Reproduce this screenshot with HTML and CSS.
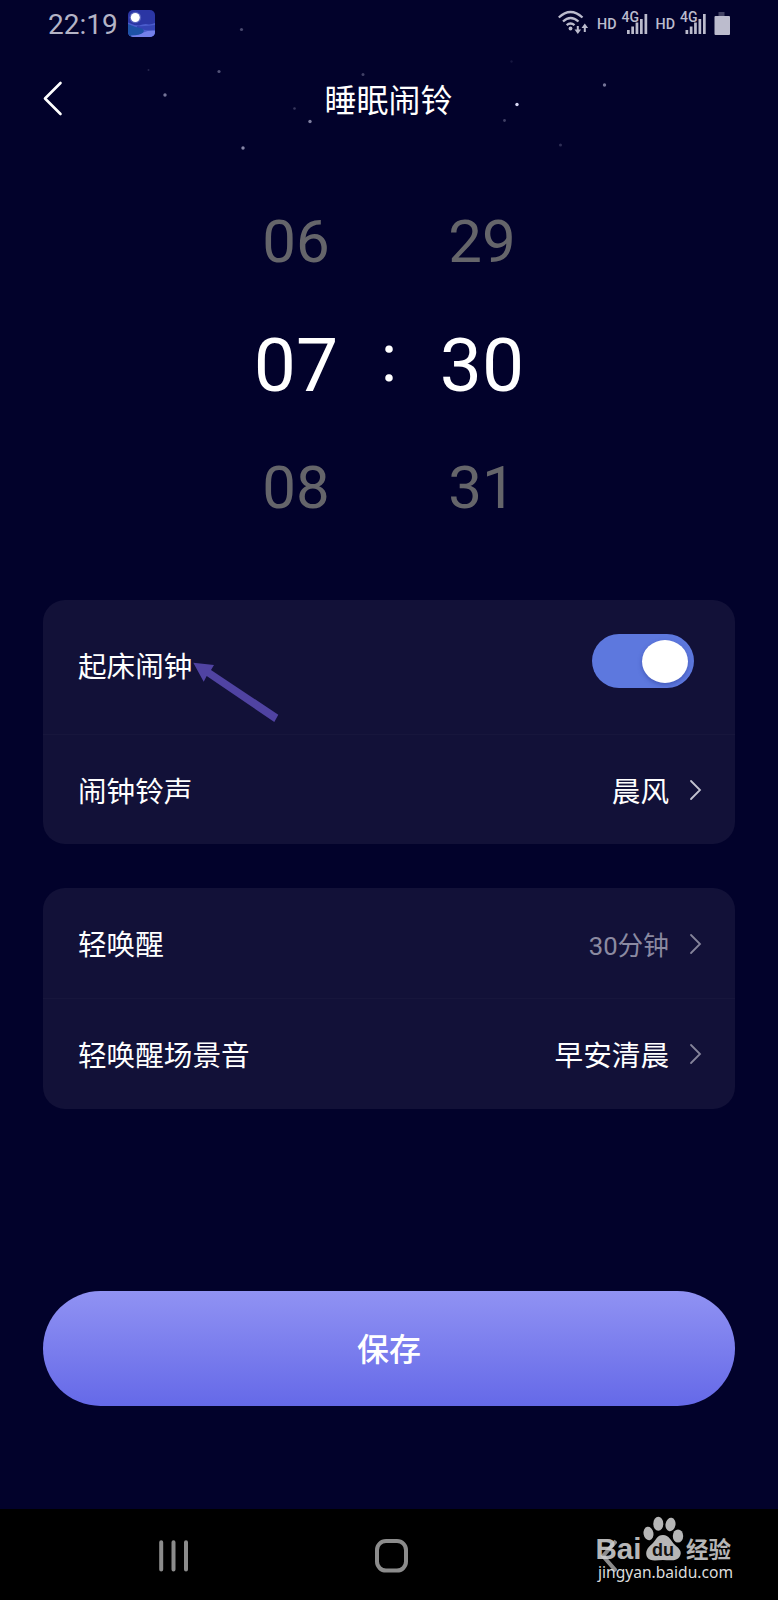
FILE: index.html
```html
<!DOCTYPE html>
<html lang="zh-CN">
<head>
<meta charset="utf-8">
<title>睡眠闹铃</title>
<link rel="stylesheet" href="styles.css">
</head>
<body>
<div class="screen">
  <svg class="stars" width="778" height="160" viewBox="0 0 778 160" fill="#b4b4d2">
    <circle cx="241.500" cy="29.500" r="1.600" opacity=".4"/>
    <circle cx="148.500" cy="70" r="1" opacity=".2"/>
    <circle cx="219" cy="71.500" r="1.600" opacity=".45"/>
    <circle cx="165" cy="95" r="1.700" opacity=".65"/>
    <circle cx="363" cy="74.500" r="1.500" opacity=".35"/>
    <circle cx="294.500" cy="108.500" r="1.300" opacity=".3"/>
    <circle cx="310" cy="121.500" r="1.700" opacity=".7"/>
    <circle cx="243" cy="148" r="1.700" opacity=".75"/>
    <circle cx="511.500" cy="61.500" r="1.200" opacity=".12"/>
    <circle cx="604.500" cy="85" r="1.700" opacity=".65"/>
    <circle cx="517" cy="104.500" r="1.700" fill="#d8d8f4"/>
    <circle cx="504.500" cy="120.500" r="1.400" opacity=".35"/>
    <circle cx="560.500" cy="145" r="1.500" opacity=".25"/>
  </svg>

  <header class="status">
    <span class="clock">22:19</span>
    <svg class="app-icon" width="27" height="27" viewBox="0 0 27 27">
      <defs><clipPath id="tile"><rect width="27" height="27" rx="5"/></clipPath></defs>
      <g clip-path="url(#tile)">
        <rect width="27" height="27" fill="#2b36a4"/>
        <circle cx="7.300" cy="7.500" r="5.800" fill="#8490d8" opacity=".5"/>
        <circle cx="7.300" cy="7.500" r="4.500" fill="#fff"/>
        <path d="M0 12.500Q6 15.500 11 15.500Q17 13 21 14.500Q24 14 27 13V27H0Z" fill="#4b5ccc"/>
        <path d="M9 16Q18 16.500 27 15V21Q18 21 9 18Z" fill="#3443b4"/>
        <path d="M0 14Q8 17.500 12 18Q17 19.500 15.500 22Q13 26 5 27H0Z" fill="#1d52a6"/>
        <path d="M27 20.500Q20 20 15.500 22.500Q12 25.500 3 25.500Q3 26 4 27H27Z" fill="#7480ea"/>
      </g>
    </svg>
    <svg class="signals" width="174" height="32" viewBox="0 0 174 32">
      <g fill="none" stroke="#bcbccd" stroke-width="2.300">
        <path d="M.8 9.500Q12.500-1.500 24.500 9.500M5 13.500Q12.500 6.500 20.500 13.500M8.700 17.200Q12.500 13.800 16.500 17.200"/>
        <path d="M19.800 18V24M26.800 24V18" stroke-width="2"/>
      </g>
      <g fill="#bcbccd">
        <circle cx="12.500" cy="20.500" r="1.900"/>
        <path d="M16.500 21.500H23.100L19.800 26ZM23.500 20H30.100L26.800 15.500Z"/>
        <text class="hd" x="39" y="20.500" textLength="19.500" lengthAdjust="spacingAndGlyphs">HD</text>
        <text class="net" x="63.500" y="13.500" textLength="17.500" lengthAdjust="spacingAndGlyphs">4G</text>
        <path d="M69 22h2.700v4H69ZM73.300 18.500h2.700V26h-2.700ZM77.600 14.500h2.700V26h-2.700ZM82 11h2.700v15H82ZM86.500 6h2.700v20h-2.700Z"/>
        <text class="hd" x="97.500" y="20.500" textLength="19.500" lengthAdjust="spacingAndGlyphs">HD</text>
        <text class="net" x="122" y="13.500" textLength="17.500" lengthAdjust="spacingAndGlyphs">4G</text>
        <path d="M127.500 22h2.700v4h-2.700ZM131.800 18.500h2.700V26h-2.700ZM136.100 14.500h2.700V26h-2.700ZM140.500 11h2.700v15h-2.700ZM145 6h2.700v20H145Z"/>
        <path d="M160.500 4h6v4h-6Z" opacity=".35"/>
        <rect x="156.500" y="8" width="15.500" height="19" rx="1"/>
      </g>
    </svg>
  </header>

  <div class="titlebar">
    <svg class="back" width="20" height="36" viewBox="0 0 20 36" fill="none" stroke="#fff" stroke-width="2.600" stroke-linecap="round" stroke-linejoin="round"><path d="M17.500 2L2 17.500L17.500 33"/></svg>
    <h1>睡眠闹铃</h1>
  </div>

  <div class="picker">
    <div class="wheel"><span>06</span><b>07</b><span>08</span></div>
    <div class="colon">:</div>
    <div class="wheel"><span>29</span><b>30</b><span>31</span></div>
  </div>

  <section class="card alarm">
    <div class="row tall">
      <span class="label">起床闹钟</span>
      <span class="toggle"><i></i></span>
      <svg class="pointer" width="90" height="64" viewBox="191 660 90 64"><path fill="#5043a2" d="M193.300 662.700L214 665L211 670L278.300 714.700L274.300 722L206.700 676L203.700 681.700Z"/></svg>
    </div>
    <div class="row">
      <span class="label">闹钟铃声</span>
      <span class="value">晨风</span>
      <svg class="chev bright" width="13" height="22" viewBox="0 0 13 22"><path d="M2 2L11 11L2 20"/></svg>
    </div>
  </section>

  <section class="card wake">
    <div class="row">
      <span class="label">轻唤醒</span>
      <span class="value dim">30分钟</span>
      <svg class="chev" width="13" height="22" viewBox="0 0 13 22"><path d="M2 2L11 11L2 20"/></svg>
    </div>
    <div class="row">
      <span class="label">轻唤醒场景音</span>
      <span class="value">早安清晨</span>
      <svg class="chev" width="13" height="22" viewBox="0 0 13 22"><path d="M2 2L11 11L2 20"/></svg>
    </div>
  </section>

  <button class="save">保存</button>

  <nav class="nav">
    <svg width="30" height="32" viewBox="0 0 30 32" stroke="#8c8c8c" stroke-width="4" stroke-linecap="round"><path d="M2.200 2.200V29.500M14.500 2.200V29.500M27 2.200V29.500"/></svg>
    <svg width="34" height="34" viewBox="0 0 34 34" fill="none" stroke="#8c8c8c" stroke-width="4"><rect x="2" y="2" width="29" height="29.600" rx="9"/></svg>
    <svg class="nav-back" width="18" height="34" viewBox="0 0 18 34" fill="none" stroke="#8c8c8c" stroke-width="4"><path d="M17 2L4 17L17 32"/></svg>
  </nav>

  <svg class="watermark" width="144" height="72" viewBox="594 1514 144 72">
    <g fill="#d0d0d0" opacity=".88">
      <text class="bai" x="595.500" y="1559" textLength="46" lengthAdjust="spacingAndGlyphs">Bai</text>
      <ellipse cx="648.500" cy="1533.500" rx="5" ry="6.800" transform="rotate(-10 648.500 1533.500)"/>
      <ellipse cx="658.300" cy="1523.800" rx="5" ry="7"/>
      <ellipse cx="670.500" cy="1524.500" rx="5" ry="6.800" transform="rotate(10 670.500 1524.500)"/>
      <ellipse cx="678" cy="1536" rx="5.200" ry="6.600"/>
      <path d="M663 1535C669 1535 671 1541 675 1545C680 1549 682 1552 680 1556C677 1562 669 1560 663 1560C657 1560 650 1562 647 1557C645 1552 647 1548 652 1544C656 1540 657 1535 663 1535Z"/>
      <text class="yan" x="686" y="1558" textLength="45" lengthAdjust="spacingAndGlyphs">经验</text>
    </g>
    <text class="du" x="652" y="1556" textLength="22" lengthAdjust="spacingAndGlyphs">du</text>
    <text class="url" x="598" y="1577.500" textLength="135" lengthAdjust="spacingAndGlyphs">jingyan.baidu.com</text>
  </svg>
</div>
</body>
</html>
```

FILE: styles.css
```css
* { box-sizing: border-box; }

body {
  margin: 0;
  background: #02022b;
  color: #fff;
  font-family: Roboto, "Noto Sans CJK SC", sans-serif;
}

.screen {
  position: relative;
  display: flex;
  flex-direction: column;
  width: 778px;
  height: 1600px;
  overflow: hidden;
}

.stars { position: absolute; top: 0; left: 0; }

.status {
  display: flex;
  align-items: center;
  height: 48px;
  padding: 0 46px 0 48px;
}

.clock {
  width: 80px;
  padding-top: 2px;
  font-size: 28px;
  line-height: 46px;
  color: #b4b4c6;
}

.app-icon { margin-bottom: 1px; }
.signals { margin: 0 0 0 auto; }
.hd { font: 500 15px Roboto, sans-serif; }
.net { font: 500 14px Roboto, sans-serif; }

.titlebar {
  display: flex;
  align-items: center;
  height: 104px;
  padding: 0 44px 0 43px;
}

.back { margin-top: -2px; }

h1 {
  flex: 1;
  margin: 0 20px 0 0;
  padding-top: 2px;
  text-align: center;
  font-size: 32px;
  font-weight: 400;
  line-height: 48px;
}

.picker {
  display: flex;
  justify-content: center;
  height: 448px;
  padding-top: 28px;
}

.wheel {
  display: flex;
  flex-direction: column;
  align-items: center;
  width: 86px;
  font-size: 60px;
  line-height: 124px;
  color: #65656a;
}

.wheel b {
  height: 122px;
  font-size: 75px;
  font-weight: 400;
  line-height: 122px;
  color: #fff;
}

.colon {
  width: 100px;
  padding-top: 118px;
  text-align: center;
  font-size: 66px;
  line-height: 122px;
}

.card {
  display: flex;
  flex-direction: column;
  margin: 0 43px;
  border-radius: 22px;
  background: #121138;
}

.alarm { height: 244px; }
.wake { height: 221px; margin-top: 44px; }

.row {
  position: relative;
  display: flex;
  align-items: center;
  flex: 1;
  padding: 0 33px 0 35px;
}

.row + .row { border-top: 1px solid #17163c; }
.tall { flex: 0 0 134px; padding-right: 41px; }

.label { flex: 1; padding-top: 4px; font-size: 28.600px; line-height: 42px; }
.tall .label { padding-top: 0; }
.value { padding-top: 4px; margin-right: 20px; font-size: 28.600px; line-height: 42px; }
.dim { padding-top: 5px; font-size: 25.700px; color: #8b8aa1; }

.chev { fill: none; stroke: #85849a; stroke-width: 1.800; stroke-linecap: round; }
.wake .row:first-child .chev { margin-top: 2px; }
.bright { stroke: #c3c3d0; }

.toggle {
  display: flex;
  align-items: center;
  justify-content: flex-end;
  width: 102px;
  height: 54px;
  margin-bottom: 12px;
  padding-right: 6px;
  border-radius: 27px;
  background: #5d78de;
}

.toggle i {
  width: 46px;
  height: 43px;
  border-radius: 50%;
  background: #fff;
  box-shadow: 0 2px 4px #2d3f9a88;
}

.pointer { position: absolute; left: 148px; top: 60px; }

.save {
  flex: none;
  height: 115px;
  margin: 182px 43px 0;
  padding: 0 0 4px;
  border: 0;
  border-radius: 58px;
  background: linear-gradient(#9092f3, #6569e8);
  color: #fff;
  font: 500 32px "Noto Sans CJK SC", sans-serif;
}

.nav {
  display: flex;
  align-items: center;
  gap: 186px;
  height: 91px;
  margin-top: auto;
  padding: 2px 0 0 159px;
  background: #000;
}

.nav-back { margin-left: 4px; }

.watermark { position: absolute; left: 594px; top: 1514px; }
.bai { font: 700 30px "Liberation Sans", sans-serif; }
.yan { font: 700 23px "Noto Sans CJK SC", sans-serif; }
.du { font: 700 19px "Liberation Sans", sans-serif; fill: #111; }
.url { font: 400 17px "Noto Sans", sans-serif; fill: #dcdcdc; }
```
